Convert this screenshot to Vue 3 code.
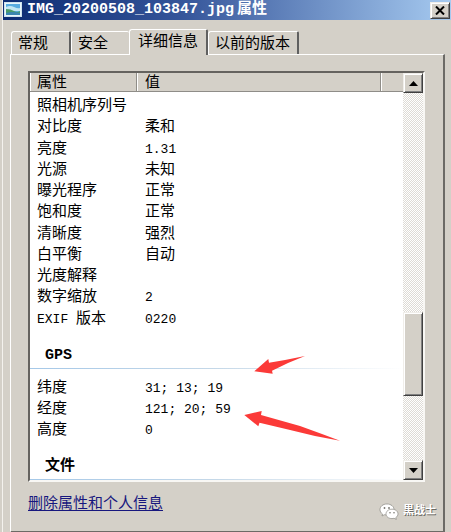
<script setup>
import { ref } from 'vue'

const tabs = ['常规', '安全', '详细信息', '以前的版本']
const active = ref(2)

const imageRows = [
  ['照相机序列号', ''],
  ['对比度', '柔和'],
  ['亮度', '1.31'],
  ['光源', '未知'],
  ['曝光程序', '正常'],
  ['饱和度', '正常'],
  ['清晰度', '强烈'],
  ['白平衡', '自动'],
  ['光度解释', ''],
  ['数字缩放', '2'],
  ['EXIF 版本', '0220'],
]
const gpsRows = [
  ['纬度', '31; 13; 19'],
  ['经度', '121; 20; 59'],
  ['高度', '0'],
]

// Latin runs are set a size smaller than the Chinese text beside them.
const runs = (text) => text.match(/[\x20-\x7e]+|[^\x20-\x7e]+/g) ?? []
const isLatin = (run) => /^[\x20-\x7e]/.test(run)
</script>

<template>
  <main class="dialog">
    <header class="titlebar">
      <svg class="picture" viewBox="0 0 18 16" aria-hidden="true">
        <rect x="0.5" y="0.5" width="17" height="14" fill="#e8f5fb" stroke="#cfe3ee" />
        <rect x="2" y="2" width="14" height="11" fill="#58ace0" />
        <path d="M2 5q4-2 8 0t6 1v3H2z" fill="#c2e6f2" />
        <path d="M2 7q5 0 8 2t6 0v4H2z" fill="#4a9a6a" />
        <path d="M2 11q7-2 14 0v2H2z" fill="#3a86b0" />
      </svg>
      <h1><span>IMG_20200508_103847.jpg</span><span>属性</span></h1>
      <button class="raised close" type="button" aria-label="关闭">
        <svg viewBox="0 0 10 9" aria-hidden="true">
          <path d="M1 0.5l8 8M9 0.5l-8 8" stroke="#000" stroke-width="2" />
        </svg>
      </button>
    </header>

    <div class="body">
      <nav class="tabs" role="tablist">
        <button
          v-for="(tab, i) in tabs"
          :key="tab"
          type="button"
          role="tab"
          class="tab"
          :class="{ active: i === active }"
          :aria-selected="i === active"
          @click="active = i"
        >{{ tab }}</button>
      </nav>

      <section class="panel" role="tabpanel">
        <div class="list">
          <table>
            <colgroup>
              <col class="name-col" />
              <col />
              <col class="end-col" />
            </colgroup>
            <thead>
              <tr><th>属性</th><th>值</th><th></th></tr>
            </thead>
            <tbody class="image">
              <tr v-for="row in imageRows" :key="row[0]">
                <td v-for="(cell, c) in row" :key="c" :colspan="c + 1">
                  <span v-for="run in runs(cell)" :key="run" :class="{ latin: isLatin(run) }">{{ run }}</span>
                </td>
              </tr>
            </tbody>
            <tbody class="gps">
              <tr class="group"><th colspan="3">GPS</th></tr>
              <tr v-for="row in gpsRows" :key="row[0]">
                <td>{{ row[0] }}</td>
                <td colspan="2"><span class="latin">{{ row[1] }}</span></td>
              </tr>
            </tbody>
            <tbody>
              <tr class="group"><th colspan="3">文件</th></tr>
            </tbody>
          </table>
          <div class="scrollbar">
            <button class="raised step" type="button" aria-label="向上滚动">
              <svg viewBox="0 0 9 5" aria-hidden="true"><path d="M0 5L4.5 0L9 5z" /></svg>
            </button>
            <div class="track"><div class="raised thumb"></div></div>
            <button class="raised step" type="button" aria-label="向下滚动">
              <svg viewBox="0 0 9 5" aria-hidden="true"><path d="M0 0L4.5 5L9 0z" /></svg>
            </button>
          </div>
        </div>
        <footer class="foot">
          <a href="#">删除属性和个人信息</a>
          <div class="mark">
            <svg viewBox="0 0 20 17" aria-hidden="true">
              <g fill="#fff" stroke="#8a8882" stroke-width="0.7">
                <path d="M8 1C3.800 1 1 3.500 1 6.700c0 1.800 1 3.300 2.500 4.300L3 13l2.400-1.300c.8.2 1.700.3 2.600.3 4 0 7-2.300 7-5.400S12 1 8 1z" />
                <path d="M13 6.200c-3.500 0-6 2.100-6 4.700s2.500 4.700 6 4.700c.8 0 1.500-.1 2.100-.3l2.200 1.100-.5-1.800c1.400-.9 2.200-2.200 2.200-3.700 0-2.600-2.500-4.700-6-4.700z" />
              </g>
              <g fill="#77756f">
                <circle cx="5.500" cy="5" r="0.9" /><circle cx="10" cy="5" r="0.9" />
                <circle cx="11" cy="9.700" r="0.8" /><circle cx="15" cy="9.700" r="0.8" />
              </g>
            </svg>
            <span>黒战士</span>
          </div>
        </footer>
      </section>
    </div>

    <svg class="arrows" viewBox="0 0 100 88" aria-hidden="true">
      <g fill="#fb3a38">
        <path d="M11.300 18.300L25.300 6L26 9.700L42 7L62 3L45 10L29 17.700L29.700 20.700z" />
        <path d="M1.300 62L18.700 58L18 62L57 73L79 81L97 87.700L72 83L45 76.500L16.500 69.700L15.300 73.300z" />
      </g>
    </svg>
  </main>
</template>

<style>
body {
  background: #d4d0c8;
}
</style>

<style scoped>
.dialog {
  position: relative;
  box-sizing: border-box;
  margin-left: 2px;
  border-left: 1px solid #f4f2ee;
  background: #d4d0c8;
  color: #000;
  font: 15px/20px "Liberation Mono", "Noto Sans CJK SC", monospace;
}
button {
  margin: 0;
  padding: 0;
  font: inherit;
  color: inherit;
}
svg {
  display: block;
}
.raised {
  box-sizing: border-box;
  border: 1px solid;
  border-color: #f0eeea #404040 #404040 #f0eeea;
  background: #d4d0c8;
  box-shadow: inset 1px 1px #fff, inset -1px -1px #808080;
}
.titlebar {
  display: flex;
  align-items: center;
  height: 20px;
  padding: 0 1px;
  background: linear-gradient(to right, #0c2b72, #35559a 40%, #a6caf0);
}
.picture {
  width: 18px;
  height: 16px;
}
h1 {
  display: flex;
  flex: 1;
  gap: 3px;
  margin: 0 0 0 5px;
  color: #fff;
  font-size: 15px;
  line-height: 20px;
  white-space: nowrap;
}
.close {
  display: grid;
  place-items: center;
  width: 20px;
  height: 17px;
}
.close svg {
  width: 10px;
  height: 9px;
}
.body {
  padding: 9px 6px 1px 7px;
}
.tabs {
  display: flex;
  align-items: flex-end;
  padding-left: 1px;
}
.tab {
  position: relative;
  height: 23px;
  padding: 4px 7px 0 6px;
  border: 1px solid;
  border-width: 1px 2px 0 1px;
  border-color: #fff #606060 #fff #fff;
  border-radius: 3px 2px 0 0;
  background: #d4d0c8;
  line-height: 18px;
  white-space: nowrap;
}
.tab:nth-child(1),
.tab:nth-child(2) {
  padding-right: 21px;
}
.tab:nth-child(2) {
  border-right: 0;
}
.tab.active {
  z-index: 1;
  height: 26px;
  margin-bottom: -1px;
  padding: 2px 8px 2px;
}
.panel {
  padding: 16px 18px 10px 17px;
  border: 1px solid;
  border-width: 1px 2px 2px 1px;
  border-color: #fff #6c6a66 #6c6a66 #fff;
}
.list {
  display: flex;
  border: 2px solid;
  border-color: #65635f #f8f7f4 #f8f7f4 #65635f;
  background: #fff;
}
table {
  flex: 1;
  min-width: 0;
  table-layout: fixed;
  border-collapse: separate;
  border-spacing: 0;
}
.name-col {
  width: 107px;
}
.end-col {
  width: 22px;
}
th,
td {
  box-sizing: border-box;
  padding: 0 0 0 8px;
  font-size: 15px;
  text-align: left;
  white-space: nowrap;
}
td:first-child,
thead th:first-child {
  padding-left: 7px;
}
td {
  height: 21px;
  padding-top: 3px;
  line-height: 18px;
  vertical-align: top;
}
.latin {
  font-size: 13px;
  white-space: pre;
}
thead th {
  height: 19px;
  padding-top: 3px;
  border-right: 1px solid #8f8d88;
  border-bottom: 1px solid #8f8d88;
  background: #d4d0c8;
  box-shadow: inset 1px 0 #fff;
  font-weight: normal;
  line-height: 15px;
  vertical-align: top;
}
thead th:last-child {
  border-right: 0;
}
.image tr:first-child td {
  height: 24px;
  padding-top: 6px;
}
.image tr:nth-child(4n + 2) td {
  height: 22px;
}
.group th {
  height: 40px;
  padding: 14px 0 0 15px;
  border-bottom: 1px solid;
  border-image: linear-gradient(to right, #a5c8e8, #c5d8e8 50%, #fff) 1;
  line-height: 20px;
}
.gps .group + tr td {
  height: 29px;
  padding-top: 11px;
}
.scrollbar {
  display: flex;
  flex: 0 0 20px;
  flex-direction: column;
}
.step {
  display: grid;
  place-items: center;
  height: 20px;
}
.step svg {
  width: 9px;
  height: 5px;
}
.track {
  flex: 1;
  display: grid;
  grid-template-rows: 220fr 84fr 64fr;
  background: repeating-conic-gradient(#dedbd5 0 25%, #fff 0 50%) 0 0 / 2px 2px;
}
.thumb {
  grid-row: 2;
}
.foot {
  display: flex;
  align-items: flex-start;
  justify-content: space-between;
  padding-top: 13px;
}
.foot a {
  color: #17177e;
  text-underline-offset: 2px;
}
.mark {
  display: flex;
  align-items: center;
  gap: 4px;
  margin: 6px -11px 0 0;
  color: #fff;
  font-size: 11px;
  font-weight: bold;
  line-height: 20px;
  text-shadow: 1px 1px #6b6963;
}
.mark svg {
  width: 20px;
  height: 17px;
}
.arrows {
  position: absolute;
  top: 353px;
  left: 240px;
  width: 100px;
  height: 88px;
  pointer-events: none;
}
</style>
